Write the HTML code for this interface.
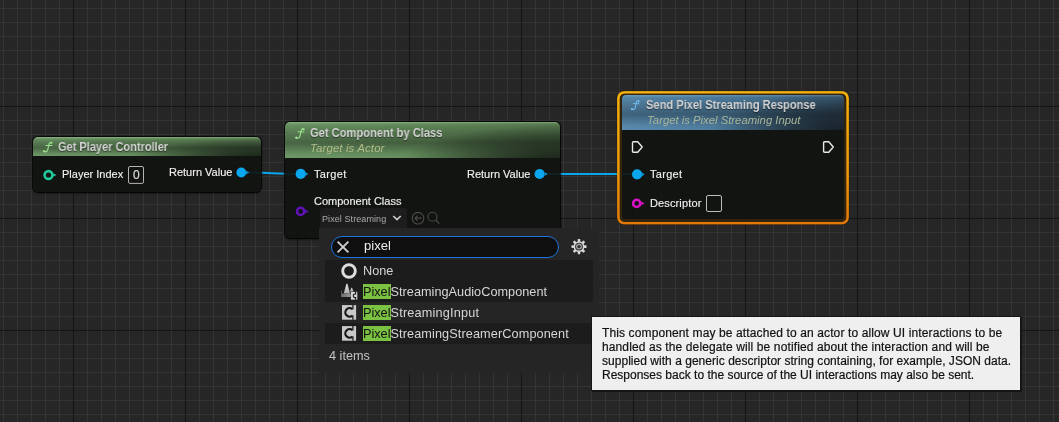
<!DOCTYPE html>
<html><head><meta charset="utf-8">
<style>
*{margin:0;padding:0;box-sizing:border-box}
html,body{width:1059px;height:422px;overflow:hidden}
body{position:relative;font-family:"Liberation Sans",sans-serif;background-color:#262626;
background-image:
 linear-gradient(to right,#151515 0,#151515 1px,transparent 1px),
 linear-gradient(to bottom,#151515 0,#151515 1px,transparent 1px),
 linear-gradient(to right,#343434 0,#343434 1px,transparent 1px),
 linear-gradient(to bottom,#343434 0,#343434 1px,transparent 1px);
background-size:112px 422px,1059px 112px,14px 422px,1059px 14px;
background-position:73px 0,0 106px,3px 0,0 8px;
}
.abs{position:absolute}
.t{position:absolute;white-space:nowrap;line-height:1;will-change:transform}
.node{position:absolute;border-radius:5px;background:rgba(16,19,15,.91);box-shadow:0 0 1px 1px rgba(0,0,0,.8),0 1px 3px rgba(0,0,0,.6)}
.hdr{position:absolute;left:0;top:0;right:0;border-radius:5px 5px 0 0}
.green{background:
 linear-gradient(to bottom,rgba(190,235,180,.38) 0,rgba(190,235,180,.1) 1.5px,rgba(190,235,180,0) 3px),
 radial-gradient(ellipse 58% 110% at 100% 118%,rgba(14,19,14,.95) 0,rgba(14,19,14,.55) 45%,rgba(14,19,14,0) 100%),
 linear-gradient(to bottom,rgba(0,0,0,0) 0%,rgba(0,0,0,.2) 30%,rgba(0,0,0,.34) 58%,rgba(0,0,0,.04) 90%,rgba(0,0,0,0) 100%),
 linear-gradient(to right,#6d9867 0%,#658e5d 50%,#587b51 100%)}
.blue{background:
 linear-gradient(to bottom,rgba(160,205,235,.28) 0,rgba(160,205,235,0) 2.5px),
 radial-gradient(ellipse 60% 125% at 100% 115%,rgba(16,20,24,.92) 0,rgba(16,20,24,.55) 45%,rgba(16,20,24,0) 100%),
 linear-gradient(to bottom,rgba(0,0,0,0) 0%,rgba(0,0,0,.3) 55%,rgba(0,0,0,.04) 88%,rgba(0,0,0,0) 100%),
 linear-gradient(to right,#5a8cb0 0%,#4d7b9c 50%,#3e6079 100%)}
.title{font-weight:bold;font-size:12px;transform:scaleX(.917);transform-origin:0 0;color:#d4d4d4;text-shadow:0 1px 1px rgba(0,0,0,.5)}
.sub{font-style:italic;font-size:11.4px;color:#b3bd88;letter-spacing:.13px}
.sub2{font-style:italic;font-size:11.3px;color:#a9b59a}
.lbl{font-size:11px;color:#f0f0f0;-webkit-text-stroke:.15px #f0f0f0}
.li{font-size:12.7px;color:#d6d6d6}
.hl{background:#7cc242;color:#111;padding:1.4px 0 0}
.tip{font-size:12px;color:#111;-webkit-text-stroke:.2px #111}
</style></head><body>

<!-- wires -->
<svg class="abs" style="left:0;top:0" width="1059" height="422">
 <path d="M246 172.5 C 270 172.5, 275 174, 300 174" stroke="#0aa6ec" stroke-width="2" fill="none"/>
 <path d="M545 174 L 618 174 M622.5 174 L637 174" stroke="#0aa6ec" stroke-width="2" fill="none"/>
</svg>

<!-- Node 1 -->
<div class="node" style="left:33px;top:137px;width:228px;height:55px">
 <div class="hdr green" style="height:19px"></div>
</div>

<!-- Node 2 -->
<div class="node" style="left:285px;top:122px;width:275px;height:115.5px">
 <div class="hdr green" style="height:36px"></div>
</div>
<div class="abs" style="left:320px;top:208px;width:87px;height:24px;background:#1d1d1d;border-radius:3px"></div>

<!-- Node 3 -->
<svg class="abs" style="left:0;top:0" width="1059" height="422">
 <defs><linearGradient id="og" x1="0" y1="0" x2="0" y2="1"><stop offset="0" stop-color="#f4b00e"/><stop offset=".6" stop-color="#f09a08"/><stop offset="1" stop-color="#e27806"/></linearGradient></defs>
 <rect x="618.4" y="92.3" width="229.2" height="130.9" rx="5.8" fill="none" stroke="url(#og)" stroke-width="2.8"/>
 <rect x="621.1" y="95.1" width="223.8" height="125.5" rx="3.8" fill="none" stroke="#33240e" stroke-width="2.6"/>
 <rect x="617" y="91" width="232" height="133.6" rx="7" fill="none" stroke="rgba(0,0,0,.35)" stroke-width=".6"/>
</svg>
<div class="node" style="left:621.6px;top:95.4px;width:222px;height:123.8px;box-shadow:none;border-radius:4px">
 <div class="hdr blue" style="height:34.4px;border-radius:4px 4px 0 0"></div>
</div>

<!-- icons & pins overlay -->
<svg class="abs" style="left:0;top:0" width="1059" height="422">
 <defs>
  <g id="f"><path d="M8.4 0.8 C7.6 0.1 6.5 0.3 6.1 1.9 L4.6 8.2 C4.2 9.6 2.6 10.3 1.0 9.3" stroke-width="1.15" fill="none" stroke-linecap="round"/><path d="M3.0 3.4 L8.8 3.6" stroke-width="1.05" fill="none" stroke-linecap="round"/><circle cx="8.4" cy="0.9" r="0.75"/><circle cx="1.1" cy="9.3" r="0.8"/></g>
  <g id="exec"><path d="M0.8 1.8 Q0.8 0.8 1.8 0.8 L6 0.8 L10.5 6 L6 11.2 L1.8 11.2 Q0.8 11.2 0.8 10.2 Z" fill="none" stroke="#e8e8e8" stroke-width="1.4" stroke-linejoin="round"/></g>
 </defs>
 <!-- f icons -->
 <use href="#f" x="43" y="142" fill="#9ee08e" stroke="#9ee08e"/>
 <use href="#f" x="295.2" y="128.4" fill="#9ee08e" stroke="#9ee08e"/>
 <g transform="translate(630.8 100.4) scale(.93)"><use href="#f" fill="#70bcee" stroke="#70bcee"/></g>

 <!-- node1 pins -->
 <circle cx="48.5" cy="175" r="3.9" fill="none" stroke="#1fc89a" stroke-width="2.6"/>
 <path d="M53.3 173.3 L56.4 175 L53.3 176.7 Z" fill="#1fc89a"/>
 <rect x="128.5" y="166.5" width="15" height="16.9" rx="1.5" fill="none" stroke="#b4b4b4" stroke-width="1"/>
 <circle cx="241.3" cy="172.5" r="4.9" fill="#0aa6ee"/>
 <path d="M245.6 170.6 L249.5 172.5 L245.6 174.4 Z" fill="#0e90cc"/>

 <!-- node2 pins -->
 <circle cx="300.7" cy="173.9" r="5.1" fill="#0aa6ee"/>
 <path d="M305.3 171.8 L308.3 173.9 L305.3 176 Z" fill="#0e90cc"/>
 <circle cx="300.6" cy="211.4" r="3.6" fill="none" stroke="#5e12b8" stroke-width="2.6"/>
 <path d="M305.2 209.6 L308.8 211.4 L305.2 213.2 Z" fill="#5e12b8"/>
 <circle cx="539.6" cy="174" r="5.1" fill="#0aa6ee"/>
 <path d="M544.6 171.9 L547.6 174 L544.6 176.1 Z" fill="#0e90cc"/>
 <!-- dropdown chevron & icons -->
 <path d="M393.3 216 L397 219.6 L400.7 216" fill="none" stroke="#d0d0d0" stroke-width="1.6"/>
 <circle cx="418" cy="218.2" r="5.8" fill="none" stroke="#4a4a4a" stroke-width="1.1"/>
 <path d="M421.5 218.2 L415 218.2 M417.6 215.6 L415 218.2 L417.6 220.8" fill="none" stroke="#4a4a4a" stroke-width="1.2"/>
 <circle cx="432.5" cy="216.8" r="4.5" fill="none" stroke="#4a4a4a" stroke-width="1.1"/>
 <path d="M435.7 220 L439.3 223.6" stroke="#4a4a4a" stroke-width="1.3"/>

 <!-- node3 pins -->
 <use href="#exec" x="631.7" y="141"/>
 <use href="#exec" x="822.8" y="141"/>
 <circle cx="637.1" cy="174.3" r="5.1" fill="#0aa6ee"/>
 <path d="M641.7 172.2 L644.7 174.3 L641.7 176.4 Z" fill="#0e90cc"/>
 <circle cx="636.7" cy="203.4" r="3.6" fill="none" stroke="#d612c6" stroke-width="2.6"/>
 <path d="M641.3 201.6 L644.6 203.4 L641.3 205.2 Z" fill="#d612c6"/>
 <rect x="706.5" y="195.5" width="15" height="16" rx="1.5" fill="none" stroke="#bcbcbc" stroke-width="1"/>
</svg>

<!-- node texts -->
<div class="t title" style="left:57.5px;top:141px">Get Player Controller</div>
<div class="t lbl" style="left:62.3px;top:169px">Player Index</div>
<div class="t lbl" style="left:132.6px;top:168.6px;color:#d4d4d4;font-size:12px">0</div>
<div class="t lbl" style="left:169.2px;top:167px">Return Value</div>

<div class="t title" style="left:309.5px;top:127px;transform:scaleX(.928)">Get Component by Class</div>
<div class="t sub" style="left:309.6px;top:143px">Target is Actor</div>
<div class="t lbl" style="left:313.5px;top:169px;letter-spacing:.35px">Target</div>
<div class="t lbl" style="left:313.5px;top:196px">Component Class</div>
<div class="t lbl" style="left:466.6px;top:169px">Return Value</div>
<div class="t" style="left:322px;top:215px;font-size:9px;color:#aaaaaa;letter-spacing:.08px">Pixel Streaming</div>

<div class="t title" style="left:645.5px;top:99px;transform:scaleX(.925)">Send Pixel Streaming Response</div>
<div class="t sub2" style="left:647px;top:114.5px">Target is Pixel Streaming Input</div>
<div class="t lbl" style="left:649.9px;top:169px;letter-spacing:.3px">Target</div>
<div class="t lbl" style="left:649.8px;top:198px;letter-spacing:.13px">Descriptor</div>

<!-- Popup -->
<div class="abs" style="left:319px;top:228px;width:280px;height:144.5px;background:#252525">
 <div class="abs" style="left:11.6px;top:8px;width:228.6px;height:21.5px;background:#0f0f0f;border:1.5px solid #1c74dc;border-radius:11px"></div>
 <div class="abs" style="left:6px;top:32px;width:268px;height:42px;background:#1c1c1c"></div>
 <div class="abs" style="left:6px;top:95px;width:268px;height:21px;background:#1c1c1c"></div>
</div>
<svg class="abs" style="left:0;top:0" width="1059" height="422">
 <path d="M337.6 241.6 L348.4 252.4 M348.4 241.6 L337.6 252.4" stroke="#cfcfcf" stroke-width="1.9"/>
 <!-- gear -->
 <g transform="translate(579 246.6)" fill="#d6d6d6">
  <rect x="-1.3" y="-7.6" width="2.6" height="15.2" rx=".6"/>
  <rect x="-1.3" y="-7.6" width="2.6" height="15.2" rx=".6" transform="rotate(45)"/>
  <rect x="-1.3" y="-7.6" width="2.6" height="15.2" rx=".6" transform="rotate(90)"/>
  <rect x="-1.3" y="-7.6" width="2.6" height="15.2" rx=".6" transform="rotate(135)"/>
  <circle r="5.4"/>
  <circle r="3.9" fill="#2a2a2a"/>
  <circle r="3" fill="#a0a0a0"/>
  <circle r="1.7" fill="#303030"/>
 </g>
 <!-- None ring -->
 <circle cx="349" cy="271" r="6.3" fill="none" stroke="#dedede" stroke-width="2.9"/>
 <!-- audio icon -->
 <defs><linearGradient id="ag" x1="0" y1="0" x2="0" y2="1"><stop offset="0" stop-color="#e8e8e8"/><stop offset="1" stop-color="#a8a8a8"/></linearGradient>
 <linearGradient id="ab" x1="0" y1="0" x2="1" y2="0"><stop offset="0" stop-color="#6a6a6a"/><stop offset="1" stop-color="#9a9a9a"/></linearGradient></defs>
 <path d="M343.7 293.6 L346.2 284.6 Q346.9 282.6 347.6 284.6 L350.1 293.6 Z" fill="url(#ag)"/>
 <path d="M349.9 291.6 L351.3 287.9 Q351.7 286.9 352.1 287.9 L353.5 291.6 Z" fill="url(#ag)"/>
 <rect x="341" y="293.6" width="9.6" height="3.4" fill="url(#ab)"/>
 <rect x="341" y="290.5" width="1" height="3.1" fill="#5a5a5a"/>
 <rect x="350.9" y="291.9" width="6.4" height="7.8" fill="#d4d4d4"/>
 <path d="M355.6 291.9 L355.6 293.9 A1.9 1.9 0 1 0 355.6 297.6 L355.6 299.7" fill="none" stroke="#1c1c1c" stroke-width="1.1"/>
 <!-- C icons -->
 <g id="cic">
  <rect x="342" y="305.1" width="14.1" height="14.6" fill="#c9c9c9"/>
  <path d="M352.4 309.1 A4.3 4.3 0 1 0 352.4 315.7" fill="none" stroke="#161616" stroke-width="2.2"/><path d="M352.9 305.1 V309.6 M352.9 315.2 V319.7" stroke="#161616" stroke-width="1.2"/>
 </g>
 <use href="#cic" x="0" y="21"/>
</svg>
<div class="t" style="left:364px;top:239px;font-size:13.1px;color:#eeeeee">pixel</div>
<div class="t li" style="left:363.4px;top:265.2px">None</div>
<div class="t li" style="left:363px;top:286.2px"><span class="hl">Pixel</span><span style="letter-spacing:.03px">StreamingAudioComponent</span></div>
<div class="t li" style="left:363px;top:307.2px"><span class="hl">Pixel</span><span style="letter-spacing:.2px">StreamingInput</span></div>
<div class="t li" style="left:363px;top:328.2px"><span class="hl">Pixel</span><span style="letter-spacing:.105px">StreamingStreamerComponent</span></div>
<div class="t li" style="left:329.3px;top:350px;color:#c4c4c4">4 items</div>

<!-- Tooltip -->
<div class="abs" style="left:591.2px;top:315.6px;width:430.3px;height:75.8px;background:#efefef;border:1.6px solid #151515;box-shadow:1px 1px 0 #151515"></div>
<div class="t tip" style="left:601.5px;top:327px;letter-spacing:.12px">This component may be attached to an actor to allow UI interactions to be</div>
<div class="t tip" style="left:601.5px;top:341px;letter-spacing:.117px">handled as the delegate will be notified about the interaction and will be</div>
<div class="t tip" style="left:602.4px;top:355px;letter-spacing:.03px">supplied with a generic descriptor string containing, for example, JSON data.</div>
<div class="t tip" style="left:601.5px;top:369px">Responses back to the source of the UI interactions may also be sent.</div>

</body></html>
